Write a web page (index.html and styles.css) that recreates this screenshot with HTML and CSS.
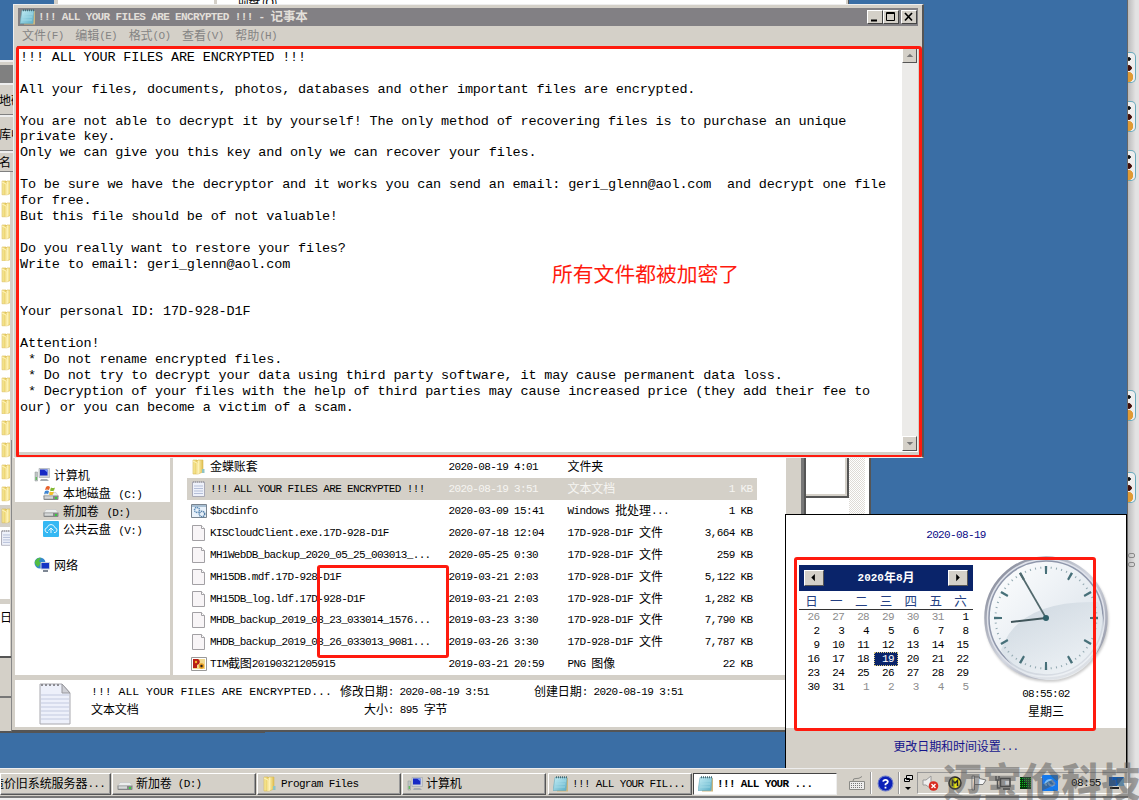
FILE: index.html
```html
<!DOCTYPE html>
<html lang="zh-CN">
<head>
<meta charset="utf-8">
<title>记事本</title>
<link rel="stylesheet" href="styles.css">
</head>
<body>
<svg class="defs" width="0" height="0">
  <defs>
    <linearGradient id="gold"><stop offset="0" stop-color="#f9eda0"/><stop offset=".5" stop-color="#e2c14d"/><stop offset=".55" stop-color="#fbf0ae"/><stop offset="1" stop-color="#e0bd4c"/></linearGradient>
    <linearGradient id="aqua" x2="1" y2="1"><stop offset="0" stop-color="#c9f0f7"/><stop offset="1" stop-color="#58adc6"/></linearGradient>
    <linearGradient id="face" x2="1" y2="1"><stop offset="0" stop-color="#fff"/><stop offset=".4" stop-color="#eef2f6"/><stop offset="1" stop-color="#d3dce5"/></linearGradient>
    <linearGradient id="sheen" x2=".7" y2="1"><stop offset="0" stop-color="#bfcbd6"/><stop offset="1" stop-color="#f6f9fb"/></linearGradient>
    <linearGradient id="rim" x2="1" y2="1"><stop offset="0" stop-color="#777b8c"/><stop offset=".5" stop-color="#d3d7e0"/><stop offset="1" stop-color="#85899a"/></linearGradient>
    <symbol id="folder" viewBox="0 0 16 16"><path d="M2 1h4v1l1-1h5v12l-5 2H2z" fill="url(#gold)" stroke="#d9b955" stroke-width=".6"/><path d="M7 2v13M2 2l4 2v11" stroke="#fff4bd" fill="none"/><path d="M11 10h2.500v4H11" fill="#8fc4c4"/></symbol>
    <symbol id="page" viewBox="0 0 16 16"><path d="M1.500.5h9l3 3v12h-12z" fill="#f8f5f7" stroke="#a2a0a4"/><path d="M10.500.5v3h3" fill="#fff" stroke="#a2a0a4"/></symbol>
    <symbol id="text" viewBox="0 0 16 16"><path d="M1.500 1h12v14.500h-12z" fill="#eef1fa" stroke="#a9a9b5"/><path d="M3 5h9M3 7.500h9M3 10h9M3 12.500h9" stroke="#b5bfd8"/><path d="M2 1h11" stroke="#888" stroke-dasharray="1 1"/></symbol>
    <symbol id="pad" viewBox="0 0 16 16"><path d="M4 2h11v13.500H4z" fill="#cfb77d"/><path d="M2 1.500h12L13 14.500H0z" fill="url(#aqua)" stroke="#6aa9bb" stroke-width=".6"/><path d="M3 5h10M3 8h9M2 11h10" stroke="#a9dee9" stroke-width=".7"/><path d="M3 1.300h11" stroke="#466c76" stroke-width="2" stroke-dasharray="1 1"/></symbol>
    <symbol id="drive" viewBox="0 0 16 16"><path d="M3 6.500h10l2.500 4H.5z" fill="#eceeee" stroke="#bbb" stroke-width=".5"/><path d="M.5 9.500h15V13q0 1-1 1h-13q-1 0-1-1z" fill="#858788"/><path d="M1.500 11.500h8.500" stroke="#d6d8d9" stroke-width="2.500"/><path d="M12 11h2v2h-2z" fill="#37ce3b"/></symbol>
    <symbol id="computer" viewBox="0 0 16 16"><path d="M5 1.500h10.500v9H5z" fill="#d0d4da" stroke="#9fa4ab" stroke-width=".6"/><path d="M6 2.500h7.500v6H6z" fill="#1729c5"/><path d="M10 2.500h3.500v3z" fill="#7d9bf7"/><path d="M7 12h6l2 2H6z" fill="#a6abb1"/><path d="M1 5h2.500v9H1z" fill="#bfc5c4" stroke="#8e9694" stroke-width=".5"/><path d="M1.700 10h1v3h-1z" fill="#3dba39"/></symbol>
  </defs>
</svg>
<div class="desktop">
  <!-- windows partly covered by the others -->
  <section class="win back-top"><div class="tab"></div><div class="tab last"><span>项盘 (O)</span></div></section>
  <section class="win host"><i></i><i></i><i></i><i class="far"></i><i class="low"></i><div class="host-glyph"><b></b><b></b></div></section>
  <section class="win back-left">
    <div class="bl-title"></div>
    <div class="bl-bar">地砖</div>
    <div class="bl-bar mid">库中</div>
    <div class="bl-bar head">名</div>
    <div class="bl-list">
      <svg><use href="#folder"/></svg><svg><use href="#folder"/></svg><svg><use href="#folder"/></svg><svg><use href="#folder"/></svg><svg><use href="#folder"/></svg><svg><use href="#folder"/></svg><svg><use href="#folder"/></svg><svg><use href="#folder"/></svg><svg><use href="#folder"/></svg><svg><use href="#folder"/></svg><svg><use href="#folder"/></svg><svg><use href="#folder"/></svg><svg><use href="#folder"/></svg><svg><use href="#folder"/></svg><svg><use href="#folder"/></svg><svg class="on"><use href="#folder"/></svg><svg><use href="#text"/></svg>
    </div>
    <div class="bl-info">日</div>
    <div class="bl-foot"></div>
  </section>
  <section class="win back-right"><div class="br-box"></div><div class="br-scroll"></div></section>

  <!-- file explorer -->
  <section class="win explorer">
    <div class="ex-main">
      <nav class="tree">
        <div class="node"><svg><use href="#computer"/></svg><span>计算机</span></div>
        <div class="node sub"><svg viewBox="0 0 16 16"><use href="#drive" y="1"/><path d="M3 2q2-2 4 0l-1 3q-2-1-4 0z" fill="#e8622c"/><path d="M8 2.500q2 1 4 0l-1 3q-2 1-4 0z" fill="#83b832"/><path d="M2 6q2-1 4 0l-1 3q-2-1-4 0z" fill="#3d85d2"/><path d="M7 6.500q2 1 4 0l-1 3q-2 1-4 0z" fill="#f3c02c"/></svg><span>本地磁盘 <b>(C:)</b></span></div>
        <div class="node sub on"><svg><use href="#drive"/></svg><span>新加卷 <b>(D:)</b></span></div>
        <div class="node sub"><svg viewBox="0 0 16 16"><rect width="16" height="16" rx="1" fill="#35b8f3"/><path d="M5 11.500H4q-2-.5-2-2.500t2-2.200Q5 3.500 8 3.500t4 3.300q2 .2 2 2.200t-2 2.500h-1M5.500 9.500L8 7l2.500 2.500M8 7v5" fill="none" stroke="#e5f8ff"/></svg><span>公共云盘 <b>(V:)</b></span></div>
        <div class="node net"><svg viewBox="0 0 16 16"><circle cx="6" cy="6" r="5.500" fill="#3488cd"/><path d="M1 4q3-4 6-3L5 4l2 2-3 4Q0 7 1 4z" fill="#53bd43"/><path d="M7 5.500h8.500v6.500H7z" fill="#1535c5" stroke="#c9d0dc"/><path d="M9 14h5" stroke="#7e8794" stroke-width="2"/></svg><span>网络</span></div>
      </nav>
      <div class="files">
        <div class="row"><svg><use href="#folder"/></svg><span><em>金蝶账套</em></span><span>2020-08-19 4:01</span><span><em>文件夹</em></span><span></span></div>
        <div class="row on"><svg><use href="#text"/></svg><span>!!! ALL YOUR FILES ARE ENCRYPTED !!!</span><span>2020-08-19 3:51</span><span><em>文本文档</em></span><span>1 KB</span></div>
        <div class="row"><svg viewBox="0 0 16 16"><path d="M.5 1.500h15v13H.5z" fill="#e8f1fa" stroke="#79848f"/><path d="M1 2h14v2H1z" fill="#a8bfd3"/><circle cx="6" cy="7" r="2.500" fill="none" stroke="#5b8bb6" stroke-width="1.500" stroke-dasharray="1.300 .6"/><circle cx="11" cy="11" r="2.700" fill="none" stroke="#537fa8" stroke-width="1.500" stroke-dasharray="1.300 .6"/></svg><span>$bcdinfo</span><span>2020-03-09 15:41</span><span>Windows <em>批处理</em>...</span><span>1 KB</span></div>
        <div class="row"><svg><use href="#page"/></svg><span>KISCloudClient.exe.17D-928-D1F</span><span>2020-07-18 12:04</span><span>17D-928-D1F <em>文件</em></span><span>3,664 KB</span></div>
        <div class="row"><svg><use href="#page"/></svg><span>MH1WebDB_backup_2020_05_25_003013_...</span><span>2020-05-25 0:30</span><span>17D-928-D1F <em>文件</em></span><span>259 KB</span></div>
        <div class="row"><svg><use href="#page"/></svg><span>MH15DB.mdf.17D-928-D1F</span><span>2019-03-21 2:03</span><span>17D-928-D1F <em>文件</em></span><span>5,122 KB</span></div>
        <div class="row"><svg><use href="#page"/></svg><span>MH15DB_log.ldf.17D-928-D1F</span><span>2019-03-21 2:03</span><span>17D-928-D1F <em>文件</em></span><span>1,282 KB</span></div>
        <div class="row"><svg><use href="#page"/></svg><span>MHDB_backup_2019_08_23_033014_1576...</span><span>2019-03-23 3:30</span><span>17D-928-D1F <em>文件</em></span><span>7,790 KB</span></div>
        <div class="row"><svg><use href="#page"/></svg><span>MHDB_backup_2019_08_26_033013_9081...</span><span>2019-03-26 3:30</span><span>17D-928-D1F <em>文件</em></span><span>7,787 KB</span></div>
        <div class="row"><svg viewBox="0 0 16 16"><path d="M.5 1.500h15v13H.5z" fill="#fff" stroke="#999"/><path d="M2 3h12v10H2z" fill="#f2d98d"/><path d="M2 3h5q3 2 1 5l-2 1v3H2z" fill="#b81e15"/><circle cx="5" cy="6" r="1.200" fill="#f7b42b"/><circle cx="10.500" cy="10" r="2.700" fill="#e79b1e"/><circle cx="10.500" cy="10" r="1.200" fill="#222"/></svg><span>TIM<em>截图</em>20190321205915</span><span>2019-03-21 20:59</span><span>PNG <em>图像</em></span><span>22 KB</span></div>
      </div>
    </div>
    <div class="details">
      <svg viewBox="0 0 32 42"><path d="M1 1h22l8 9v31H1z" fill="#edf0fa" stroke="#a8a8ae"/><path d="M23 1v9h8z" fill="#cfd0d6" stroke="#98989e"/><path d="M2 12h28M2 16h28M2 20h28M2 24h28M2 28h28M2 32h28M2 36h28" stroke="#c3cae0"/><path d="M2 2h20" stroke="#8c8c92" stroke-width="2" stroke-dasharray="2 2"/></svg>
      <div class="d-name"><p>!!! ALL YOUR FILES ARE ENCRYPTED...</p><p><em>文本文档</em></p></div>
      <div class="d-mod"><p><em>修改日期</em>: 2020-08-19 3:51</p><p><em>大小</em>: 895 <em>字节</em></p></div>
      <div class="d-new"><p><em>创建日期</em>: 2020-08-19 3:51</p></div>
    </div>
  </section>
  <div class="mark m-list"></div>

  <!-- notepad -->
  <section class="win notepad">
    <header class="np-title"><svg><use href="#pad"/></svg><span>!!! ALL YOUR FILES ARE ENCRYPTED !!! - <em>记事本</em></span>
      <div class="btns"><svg viewBox="0 0 14 12"><path d="M3 9.500h6" stroke="#000" stroke-width="2"/></svg><svg viewBox="0 0 14 12"><path d="M2.500 1.500h8v8h-8zM2 2.500h9" fill="none" stroke="#000"/></svg><svg class="x" viewBox="0 0 14 12"><path d="M3 2l7 7.500M10 2L3 9.500" stroke="#000" stroke-width="1.700"/></svg></div>
    </header>
    <div class="menu"><span><em>文件</em>(F)</span><span><em>编辑</em>(E)</span><span><em>格式</em>(O)</span><span><em>查看</em>(V)</span><span><em>帮助</em>(H)</span></div>
    <div class="np-body">
<pre>!!! ALL YOUR FILES ARE ENCRYPTED !!!

All your files, documents, photos, databases and other important files are encrypted.

You are not able to decrypt it by yourself! The only method of recovering files is to purchase an unique
private key.
Only we can give you this key and only we can recover your files.

To be sure we have the decryptor and it works you can send an email: geri_glenn@aol.com  and decrypt one file
for free.
But this file should be of not valuable!

Do you really want to restore your files?
Write to email: geri_glenn@aol.com


Your personal ID: 17D-928-D1F

Attention!
 * Do not rename encrypted files.
 * Do not try to decrypt your data using third party software, it may cause permanent data loss.
 * Decryption of your files with the help of third parties may cause increased price (they add their fee to
our) or you can become a victim of a scam.</pre>
      <div class="scroll"><svg viewBox="0 0 14 14"><path d="M4 8.500h7L7.500 5z" fill="#777"/></svg><svg viewBox="0 0 14 14"><path d="M4 5.500h7L7.500 9z" fill="#777"/></svg></div>
    </div>
    <div class="mark m-pad"></div>
    <div class="caption">所有文件都被加密了</div>
  </section>

  <!-- calendar and clock -->
  <section class="win clock">
    <div class="today">2020-08-19</div>
    <div class="cc">
      <div class="cal">
        <div class="cal-head"><svg viewBox="0 0 20 15"><path d="M11 3v8L7 7z"/></svg><span>2020<em>年</em>8<em>月</em></span><svg viewBox="0 0 20 15"><path d="M8 3v8l4-4z"/></svg></div>
        <div class="week"><span>日</span><span>一</span><span>二</span><span>三</span><span>四</span><span>五</span><span>六</span></div>
        <div class="days"><s>26</s><s>27</s><s>28</s><s>29</s><s>30</s><s>31</s><b>1</b><b>2</b><b>3</b><b>4</b><b>5</b><b>6</b><b>7</b><b>8</b><b>9</b><b>10</b><b>11</b><b>12</b><b>13</b><b>14</b><b>15</b><b>16</b><b>17</b><b>18</b><b class="on">19</b><b>20</b><b>21</b><b>22</b><b>23</b><b>24</b><b>25</b><b>26</b><b>27</b><b>28</b><b>29</b><b>30</b><b>31</b><s>1</s><s>2</s><s>3</s><s>4</s><s>5</s></div>
      </div>
      <div class="dial">
        <svg viewBox="-62 -62 124 124">
          <circle r="60.500" fill="#dfe2ea" stroke="url(#rim)" stroke-width="2.500"/>
          <circle r="57" fill="url(#face)" stroke="#8f97ab" stroke-width="1.500"/>
          <path d="M-45 32Q-28-18 52-16A54 54 0 0 1-45 32z" fill="url(#sheen)" opacity=".75"/>
          <circle r="50.500" pathLength="60" fill="none" stroke="#93aab2" stroke-width="2" stroke-dasharray=".2 .8" stroke-dashoffset=".1"/>
          <circle r="48" pathLength="120" fill="none" stroke="#477079" stroke-width="8" stroke-dasharray=".9 9.100" stroke-dashoffset=".45"/>
          <path d="M0 0L-26-45" stroke="#52696d" stroke-width="1.700"/><path d="M0 0L-35 4" stroke="#40555a" stroke-width="2"/><circle r="3" fill="#2e5f68"/>
        </svg>
        <p>08:55:02</p><p><em>星期三</em></p>
      </div>
    </div>
    <div class="change"><em>更改日期和时间设置</em>...</div>
    <div class="mark m-cal"></div>
  </section>

  <footer class="taskbar">
    <div class="task first"><span><em>造价旧系统服务器</em>...</span></div>
    <div class="task"><svg><use href="#drive"/></svg><span><em>新加卷</em> (D:)</span></div>
    <div class="task"><svg><use href="#folder"/></svg><span>Program Files</span></div>
    <div class="task"><svg><use href="#computer"/></svg><span><em>计算机</em></span></div>
    <div class="task gap"><svg><use href="#pad"/></svg><span>!!! ALL YOUR FIL...</span></div>
    <div class="task on"><svg><use href="#pad"/></svg><span>!!! ALL YOUR ...</span></div>
    <div class="tray">
      <svg class="kb" viewBox="0 0 18 16"><path d="M1.500 6.500h15v8h-15z" fill="#eee" stroke="#8a8a86"/><path d="M5 6q0-3 3-2.500T14 1.500" fill="none" stroke="#8a8a86"/><path d="M3 8.500h12M3 10.500h12M3 12.500h12" stroke="#777" stroke-dasharray="1 1"/></svg>
      <i></i>
      <svg class="help" viewBox="0 0 16 16"><circle cx="8" cy="8" r="7" fill="#0b20b8" stroke="#6b7bc9"/><path d="M5.800 6.300Q6 4.500 8 4.500t2.200 1.800Q10.200 7.500 8 8.700v1M8 11v1.600" fill="none" stroke="#fff" stroke-width="1.700"/></svg>
      <i></i>
      <svg class="res" viewBox="0 0 9 16"><path d="M2.500.5h6v4h-6zM.5 3.500h5v3h-5z" fill="#ddd" stroke="#000"/><path d="M1 12h6l-3 3z"/></svg>
      <div class="sunk">
      <svg class="vol" viewBox="0 0 17 16"><path d="M1 5h3l5-4v13l-5-4H1z" fill="#eee" stroke="#999"/><circle cx="11.500" cy="11" r="4.800" fill="#d92b21"/><path d="M9.500 9l4 4m0-4l-4 4" stroke="#fff" stroke-width="1.400"/></svg>
      <svg class="em" viewBox="0 0 14 16"><circle cx="7" cy="8" r="6" fill="#e9df16" stroke="#222" stroke-width="1.500"/><path d="M4.500 11V5.500L7 8l2.500-2.500V11" fill="none" stroke="#222" stroke-width="1.500"/></svg>
      <svg class="flag" viewBox="0 0 16 16"><path d="M1 1h2.500v14H1zM3.500 2h5v1.500L15 5l-3 4.500H3.500z" fill="#f5f5f5" stroke="#777"/></svg>
      <svg class="netw" viewBox="0 0 16 16"><path d="M5.500 3.500h9.500v8H5.500zM8 14h7" fill="#c8c8c8" stroke="#444" stroke-width="1.500"/><path d="M1 1v4h3V1M2.500 5v8h3" fill="none" stroke="#555" stroke-width="1.500"/></svg>
      <svg class="grid" viewBox="0 0 11 12"><path d="M0 0h11v12H0z" fill="#06350b"/><path d="M0 1.500h11M0 3.500h11M0 5.500h11M0 7.500h11M0 9.500h11" stroke="#12b81f" stroke-dasharray="1 1"/></svg>
      <svg class="cloud" viewBox="0 0 16 16"><rect width="16" height="16" rx="1" fill="#1479ec"/><path d="M5 10Q2.500 10 3.500 8 5 5 8.500 5q2 0 2.500 2 3 1.500 0 3.500-3 1-5-3" fill="none" stroke="#7fbdf8" stroke-width="1.800"/></svg>
      <time>08:55</time>
      <svg class="desk" viewBox="0 0 15 12"><path d="M0 0h15v9H0z" fill="#1658a8"/><path d="M15 0v9H8z" fill="#69b3e5"/><path d="M1 11h9" stroke="#222" stroke-width="2"/></svg>
      </div>
    </div>
  </footer>
  <div class="watermark">迈宝伦科技</div>
</div>
</body>
</html>
```
FILE: styles.css
```css
* { box-sizing: border-box; }
body { margin: 0; overflow: hidden; }
p, pre { margin: 0; }
.defs { display: block; height: 0; }

.desktop {
  position: relative;
  width: 1139px;
  height: 800px;
  overflow: hidden;
  background: #3a6ea5;
  color: #000;
  font: 11px/18px "Liberation Mono", "Noto Sans CJK SC", monospace;
  letter-spacing: -0.64px;
}
.desktop span, .desktop p { white-space: pre; }
.desktop em {
  font: 12px/1 "Noto Sans CJK SC", sans-serif;
  letter-spacing: -0.08px;
  vertical-align: -1px;
}
.win { position: absolute; background: #d4d0c8; overflow: hidden; }
.mark { position: absolute; border: 3px solid #ff1a0e; border-radius: 3px; pointer-events: none; }

/* covered windows */
.back-top { left: 54px; top: 0; width: 795px; height: 8px; display: flex; gap: 3px; padding-left: 4px; border-right: 1px solid #555; }
.tab { width: 156px; background: #fff; }
.tab.last { flex: 1; margin-right: 2px; padding-left: 20px; font: 12px/18px "Noto Sans CJK SC", sans-serif; }
.tab.last span { display: block; margin-top: -7px; }

.host { left: 1127px; top: 0; width: 12px; height: 800px; padding-top: 52px; border-left: 1px solid #666; background: linear-gradient(90deg, #bcbcbc, #e3e3e3 70%); }
.host i {
  display: block; width: 8px; height: 31px; margin-bottom: 18px;
  border: 1px solid #68aabd; border-left: 0; border-radius: 0 5px 5px 0;
  background: radial-gradient(circle at 1px 6px, #111 1.500px, transparent 2px), radial-gradient(circle at 1px 15px, #42100a 2.500px, transparent 3px), radial-gradient(circle at 0 24px, #df9b35 5px, transparent 5.500px), #eee;
}
.host i.far { margin-top: 209px; margin-bottom: 51px; }
.host i.low { margin-bottom: 50px; }
.host-glyph { display: grid; gap: 4px; }
.host-glyph b { width: 7px; height: 5px; border: 1px solid #888; border-radius: 2px; }

.back-left { left: 0; top: 60px; width: 265px; height: 673px; border-top: 2px solid #eee; border-bottom: 2px solid #555; font: 12px/16px "Noto Sans CJK SC", sans-serif; letter-spacing: 0; }
.bl-title { height: 18px; margin-top: 3px; background: #808080; }
.bl-bar { height: 32px; padding-top: 7px; margin-left: -1px; border-bottom: 1px solid #808080; border-top: 2px solid #eee; width: 15px; overflow: hidden; white-space: nowrap; }
.bl-bar.mid { height: 36px; padding-top: 9px; }
.bl-bar.head { height: 21px; padding-top: 1px; }
.bl-list { display: flex; flex-direction: column; width: 10px; height: 427px; padding-top: 5px; background: #fff; overflow: hidden; }
.bl-list svg { flex: none; width: 16px; height: 21.860px; padding: 3px 0; }
.bl-list svg.on { background: #d4d0c8; }
.bl-info { width: 10px; height: 52px; margin-top: 5px; padding-top: 5px; background: #fff; overflow: hidden; }
.bl-foot { width: 12px; height: 42px; border-top: 2px solid #555; border-bottom: 2px solid #777; }

.back-right { left: 804px; top: 440px; width: 67px; height: 90px; display: flex; border-left: 2px solid #555; border-right: 2px solid #555; background: #fff; }
.br-box { width: 43px; height: 58px; border-right: 2px solid #555; border-bottom: 2px solid #555; box-shadow: inset -2px -2px #d4d0c8; }
.br-scroll { width: 16px; background: repeating-conic-gradient(#dedbd6 0 25%, #fff 0 50%) 0 0 / 2px 2px; }

/* explorer */
.explorer { left: 11px; top: 440px; width: 793px; height: 292px; padding: 0 0 3px 3px; border-left: 1px solid #888; border-bottom: 2px solid #555; border-right: 3px solid #777; display: flex; flex-direction: column; }
.ex-main { display: flex; gap: 3px; height: 235px; margin-right: 15px; }
.tree { width: 155px; padding-top: 26px; background: #fff; font: 12px/18px "Noto Sans CJK SC", sans-serif; letter-spacing: -0.08px; }
.node { display: flex; gap: 4px; height: 18px; padding-left: 19px; }
.node svg { width: 16px; height: 16px; margin-top: 1px; }
.node.sub { padding-left: 28px; }
.node.on { background: #d4d0c8; }
.node.net { margin-top: 18px; }
.node b { font: 11px/1 "Liberation Mono", monospace; letter-spacing: -0.64px; margin-left: 5px; }
.files { flex: 1; padding: 16.500px 0 0 14px; background: #fff; }
.row { display: grid; grid-template-columns: 23px 238.500px 119px 119px 66px; align-items: center; width: 570px; height: 21.860px; }
.row svg { width: 16px; height: 16px; margin-left: 4px; }
.row span { line-height: 18px; height: 18px; }
.row span:last-child { text-align: right; }
.row.on { background: #d4d0c8; }
.row.on span + span { color: #f6f5f2; }
.details { display: flex; height: 47px; margin: 5px 16px 0 0; padding: 3px 0 0 24px; background: #fff; }
.details svg { width: 32px; height: 42px; margin-right: 20px; }
.details p { height: 18px; }
.d-name { width: 249px; font-size: 11.500px; letter-spacing: -0.0200px; }
.d-mod { width: 194px; }
.d-mod p + p { padding-left: 24px; }

/* notepad */
.notepad { left: 13px; top: 4px; width: 911px; height: 454px; padding: 3px 4px 0 4px; border: 1px solid #eee; border-right: 2px solid #555; }
.np-title { display: flex; align-items: center; height: 18px; padding-left: 2px; background: #828084; color: #e2dfd9; font-weight: bold; }
.np-title > svg { width: 16px; height: 16px; margin-right: 2px; }
.np-title em { font-weight: bold; font-size: 12.500px; }
.btns { display: flex; margin-left: auto; padding-right: 1px; }
.btns svg { width: 16px; height: 14px; background: #d4d0c8; border: 1px solid; border-color: #fff #444 #444 #fff; }
.btns .x { margin-left: 2px; }
.menu { display: flex; gap: 11.600px; height: 20px; padding: 1px 0 0 4px; color: #848484; }
.np-body { display: flex; justify-content: space-between; height: 406px; margin-left: -1px; background: #fff; border-top: 2px solid #777; }
.np-body pre { padding: 2px 0 0 3px; font: 13.500px/15.890px "Liberation Mono", monospace; letter-spacing: -0.157px; }
.scroll { display: flex; flex-direction: column; justify-content: space-between; width: 16px; height: 403px; background: #ecebe9; }
.scroll svg { width: 15px; height: 15px; background: #d4d0c8; border: 1px solid; border-color: #fff #555 #555 #fff; }
.m-pad { left: 2px; top: 41px; width: 906px; height: 412px; }
.caption { position: absolute; left: 538px; top: 254px; color: #ff1a0e; font: 20.800px/28px "Noto Sans CJK SC", sans-serif; letter-spacing: 0; }
.m-list { left: 317px; top: 565px; width: 132px; height: 93px; }

/* clock */
.clock { left: 785px; top: 514px; width: 342px; height: 255px; border: 1px solid #000; background: #fff; display: flex; flex-direction: column; }
.today { height: 41px; padding-top: 11px; color: #0a0a86; text-align: center; }
.cc { display: flex; justify-content: space-between; height: 172px; padding: 0 18px 0 13px; }
.cal { width: 174px; padding-top: 9px; }
.cal-head { display: flex; align-items: center; justify-content: space-between; height: 26px; padding: 0 5px; background: #0a246a; color: #fff; font-weight: bold; letter-spacing: 0; }
.cal-head em { font-weight: bold; }
.cal-head svg { width: 20px; height: 16px; background: #d4d0c8; border: 1px solid; border-color: #fff #555 #555 #fff; }
.week, .days { display: grid; grid-template-columns: repeat(7, 24.860px); }
.week { height: 19px; border-bottom: 1px solid #333; color: #243f82; font: 12.500px/19px "Noto Sans CJK SC", sans-serif; letter-spacing: 0; text-align: center; }
.days b, .days s { height: 14px; padding-right: 4.500px; text-align: right; text-decoration: none; font-weight: normal; line-height: 14px; }
.days s { color: #8c8c8c; }
.days .on { background: #0a246a; color: #fff; outline: 1px dotted #d9c77d; outline-offset: -1px; }
.dial { width: 124px; text-align: center; }
.dial svg { display: block; width: 124px; height: 124px; filter: drop-shadow(1px 2px 1px #0003); }
.dial p { height: 18px; margin-top: 5px; }
.dial p + p { margin-top: 0; }
.change { flex: 1; padding-top: 10px; background: #d4d0c8; color: #14148c; text-align: center; }
.m-cal { left: 8px; top: 42px; width: 302px; height: 174px; }

/* taskbar */
.taskbar { position: absolute; left: 0; top: 768px; width: 1128px; height: 30px; padding: 4px 0 3px; display: flex; gap: 1px; background: #d4d0c8; border-top: 1px solid #eee; border-bottom: 2px solid #777; box-shadow: 0 2px #eee; }
.task { display: flex; align-items: center; gap: 3px; width: 144px; height: 22px; padding-left: 4px; border: 1px solid; border-color: #fff #555 #555 #fff; box-shadow: inset -1px -1px #999; overflow: hidden; }
.task svg { flex: none; width: 16px; height: 16px; }
.task.first { width: 111px; padding-left: 0; }
.task.first span { margin-left: -9px; }
.task.gap { margin-left: 1px; }
.task.on { background: #fff; font-weight: bold; border-color: #444 #eee #eee #444; box-shadow: none; }
.tray { flex: 1; display: flex; align-items: center; margin-left: 10px; }
.tray svg { flex: none; width: 16px; height: 16px; }
.tray i { width: 2px; height: 22px; margin-left: 4px; border-left: 1px solid #999; border-right: 1px solid #fff; }
.sunk { display: flex; align-items: center; flex: 1; height: 22px; margin-left: 4px; border: 1px solid; border-color: #999 #fff #fff #999; }
.tray .kb { width: 18px; }
.tray .help { width: 17px; height: 17px; margin-left: 5px; }
.tray .res { width: 9px; margin-left: 4px; }
.tray .vol { width: 17px; margin-left: 4px; }
.tray .em { width: 14px; margin-left: 9px; }
.tray .flag { margin-left: 9px; }
.tray .netw { margin-left: 8px; }
.tray .grid { width: 11px; height: 12px; margin-left: 9px; }
.tray .cloud { margin-left: 11px; }
.tray time { margin-left: 13px; }
.tray .desk { width: 15px; height: 12px; margin-left: 8px; }
.watermark { position: absolute; left: 943px; top: 756px; white-space: nowrap; color: #55555580; font: 900 39.500px/48px "Noto Sans CJK SC", sans-serif; letter-spacing: 0; }
```
